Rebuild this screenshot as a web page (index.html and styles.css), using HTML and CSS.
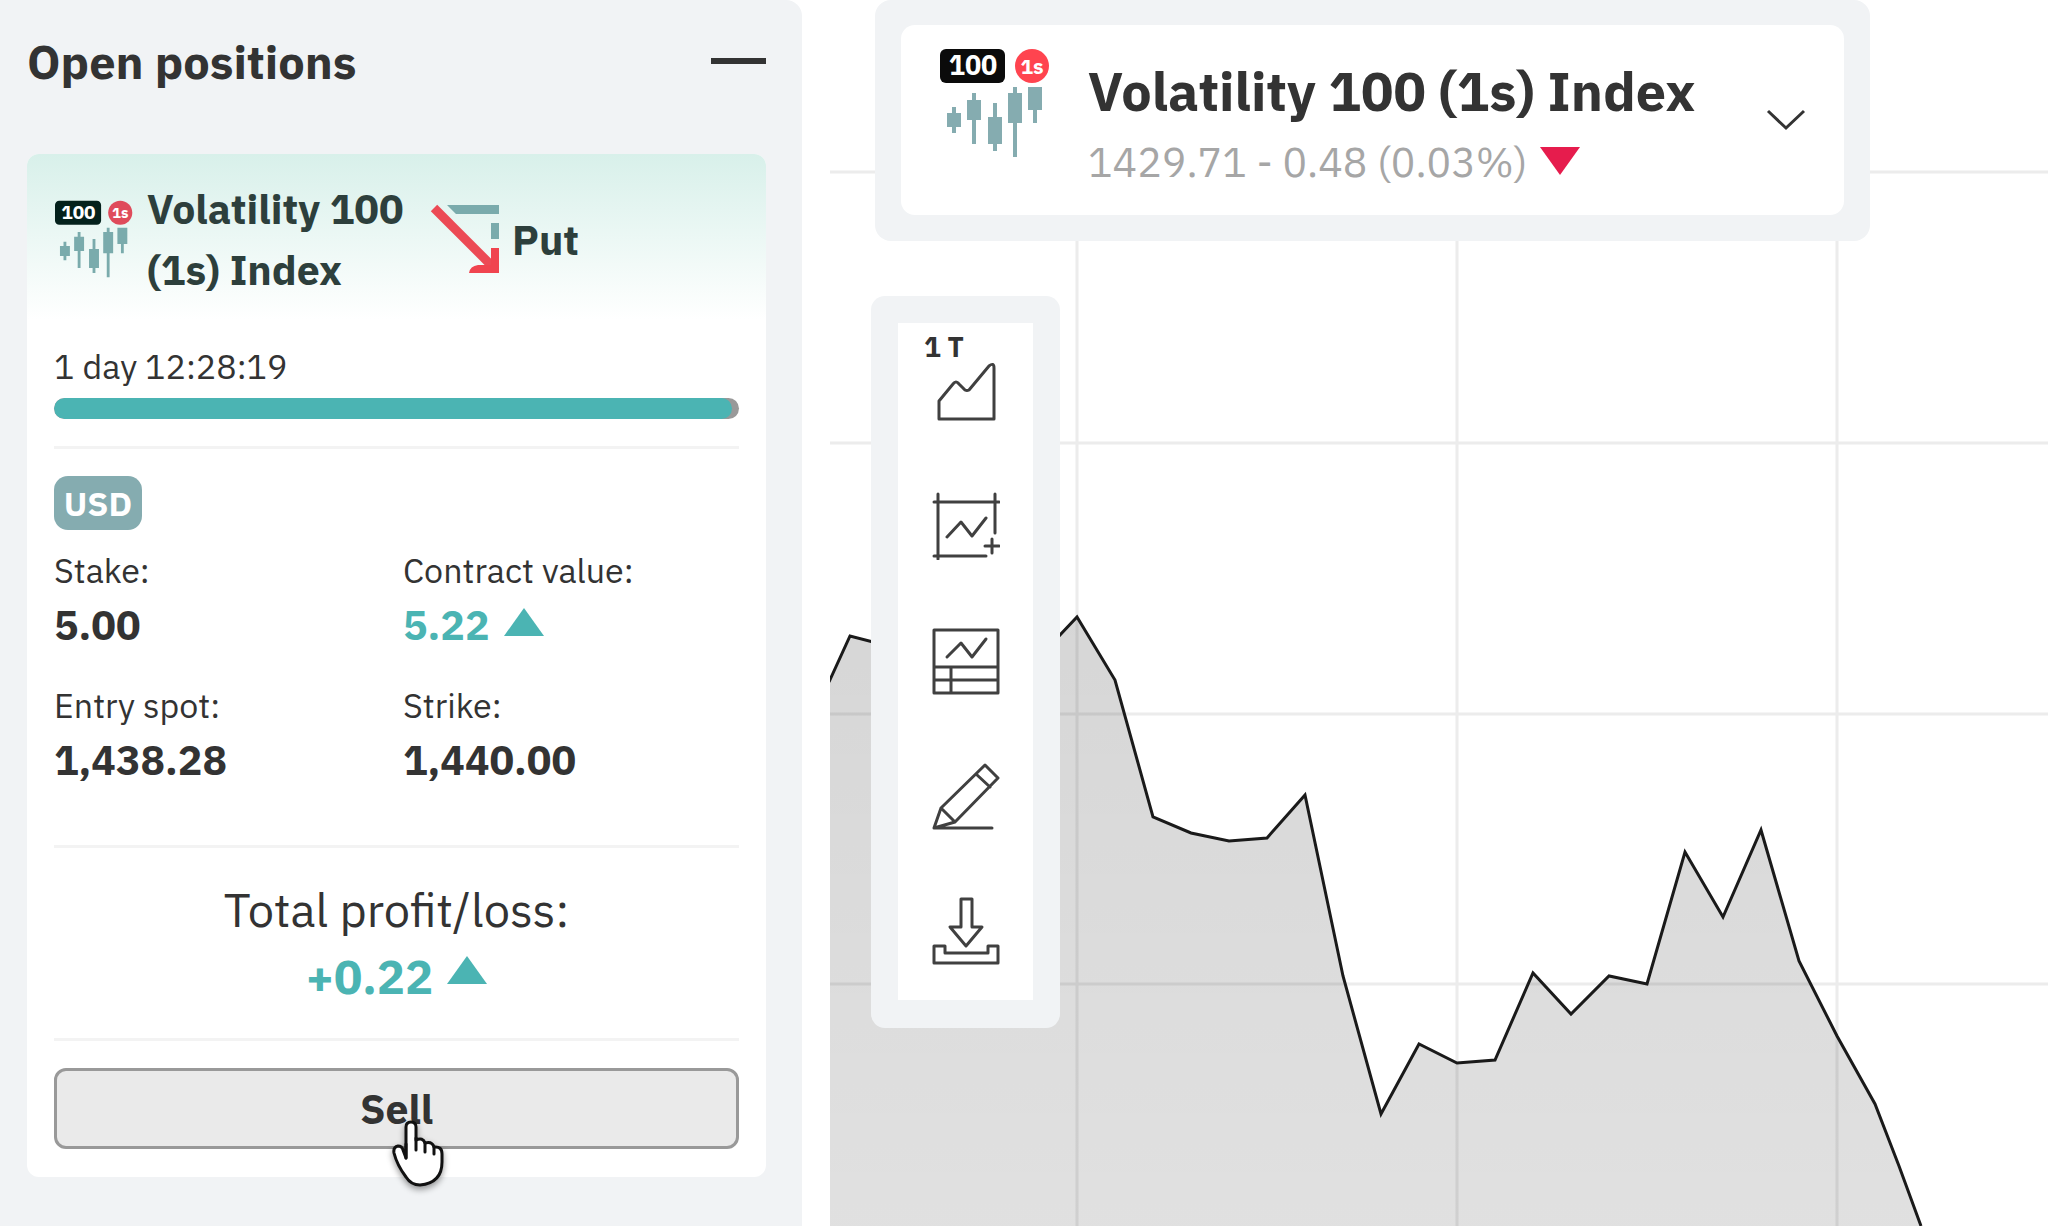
FILE: index.html
```html
<!DOCTYPE html>
<html lang="en">
<head>
<meta charset="utf-8">
<title>Open positions</title>
<link rel="stylesheet" href="styles.css">
</head>
<body>
<aside class="positions">
  <header class="positions-head">
    <h1>Open positions</h1>
    <button class="minimize" type="button" aria-label="Minimize"><span></span></button>
  </header>

  <article class="card">
    <div class="card-head">
      <svg class="index-small" viewBox="0 0 110 110" aria-hidden="true">
        <rect y="1" width="65" height="34" rx="6" fill="#04211c"/>
        <text x="33" y="27" class="icon-num">100</text>
        <circle cx="92" cy="18" r="17" fill="#df4b5b"/>
        <text x="92" y="26" class="icon-sec">1s</text>
        <path fill="#7aabac" d="M7 65h5v-6h4v6h5v14h-5v6h-4v-6H7zM27 52h5v-7h4v7h5v20h-5v24h-4V72h-5zM48 69h5V55h4v14h5v27h-5v7h-4v-7h-5zM68 45h5v-6h4v6h5v30h-5v34h-4V75h-5zM88 39h14v23h-5v13h-4V62h-5z"/>
      </svg>
      <h2>Volatility 100 (1s) Index</h2>
      <svg class="put-icon" viewBox="0 0 70 70" aria-hidden="true">
        <path fill="#7aabac" d="M17 1h52v9H26zM61 19h8v16h-8z"/>
        <path stroke="#ec4a55" stroke-width="9" d="M4 4l58 58"/>
        <path fill="#f0444f" d="M69 44v25H39q1-7 9-8h13V44z"/>
      </svg>
      <span class="put">Put</span>
    </div>

    <div class="card-body">
      <p class="label">1 day 12:28:19</p>
      <div class="bar"><div class="bar-fill" style="width:99%"></div></div>
      <hr>
      <span class="currency">USD</span>
      <dl class="figures">
        <div><dt>Stake:</dt><dd>5.00</dd></div>
        <div><dt>Contract value:</dt><dd class="up">5.22 <svg class="tri tri-value" viewBox="0 0 40 28"><path d="M20 0l20 28H0z"/></svg></dd></div>
        <div><dt>Entry spot:</dt><dd>1,438.28</dd></div>
        <div><dt>Strike:</dt><dd>1,440.00</dd></div>
      </dl>
      <hr>
      <div class="total">
        <p>Total profit/loss:</p>
        <p class="up total-value">+0.22 <svg class="tri" viewBox="0 0 40 28"><path d="M20 0l20 28H0z"/></svg></p>
      </div>
      <hr>
      <button class="sell" type="button">Sell
        <svg class="pointer" viewBox="0 0 52 68" aria-hidden="true">
          <path d="M14 38V7q0-5 5-5t5 5v13q7-3 9 3 7-2 9 4 8-1 8 7v8q0 21-22 23-9 0-14-8Q5 45 2 33q-1-6 4-7 4 0 5 4z"/>
          <path d="M14 38V24M24 18v12M33 23v9M42 27v7"/>
        </svg>
      </button>
    </div>
  </article>
</aside>

<main class="chart">
  <svg class="plot" viewBox="1 0 1218 1226" preserveAspectRatio="xMinYMin slice" aria-hidden="true">
    <defs>
      <linearGradient id="area" x1="0" y1="0" x2="0" y2="1">
        <stop offset="0" stop-color="#000" stop-opacity=".16"/>
        <stop offset="1" stop-color="#000" stop-opacity=".12"/>
      </linearGradient>
    </defs>
    <path class="grid" d="M0 172H1219M0 443H1219M0 714H1219M0 984H1219M248 0V1226M628 0V1226M1008 0V1226"/>
    <path fill="url(#area)" d="M0 1226V682L21 636L44 642L230 636L248 617L286 680L324 817L362 833L400 841L438 838L476 795L514 976L552 1114L590 1044L628 1063L666 1060L704 973L742 1014L780 976L818 984L856 852L894 917L932 830L970 961L1008 1036L1046 1104L1070 1166L1092 1226Z"/>
    <path class="line" d="M0 682L21 636L44 642L230 636L248 617L286 680L324 817L362 833L400 841L438 838L476 795L514 976L552 1114L590 1044L628 1063L666 1060L704 973L742 1014L780 976L818 984L856 852L894 917L932 830L970 961L1008 1036L1046 1104L1070 1166L1092 1226"/>
  </svg>

  <div class="symbol-box">
    <button class="symbol" type="button">
      <svg class="index-large" viewBox="0 0 110 110" aria-hidden="true">
        <rect y="1" width="65" height="34" rx="6" fill="#0b0b0b"/>
        <text x="33" y="27" class="icon-num">100</text>
        <circle cx="92" cy="18" r="17" fill="#ff444f"/>
        <text x="92" y="26" class="icon-sec">1s</text>
        <path fill="#85acb0" d="M7 65h5v-6h4v6h5v14h-5v6h-4v-6H7zM27 52h5v-7h4v7h5v20h-5v24h-4V72h-5zM48 69h5V55h4v14h5v27h-5v7h-4v-7h-5zM68 45h5v-6h4v6h5v30h-5v34h-4V75h-5zM88 39h14v23h-5v13h-4V62h-5z"/>
      </svg>
      <span class="symbol-text">
        <span class="symbol-name">Volatility 100 (1s) Index</span>
        <span class="symbol-price">1429.71 - 0.48 (0.03%) <svg class="tri-down" viewBox="0 0 40 28"><path d="M0 0h40L20 28z"/></svg></span>
      </span>
      <svg class="chevron" viewBox="0 0 40 22" aria-hidden="true"><path d="M2 2l18 17L38 2"/></svg>
    </button>
  </div>

  <nav class="tools" aria-label="Chart tools">
    <div class="tools-list">
      <button type="button" aria-label="Chart type, 1 tick">
        <span class="tick">1 T</span>
        <svg viewBox="0 0 68 68"><path d="M7 62V44L21 27q3-4 6 0l6 6q2 1 4 0L57 9q5-4 5 2v51z"/></svg>
      </button>
      <button type="button" aria-label="Indicators">
        <svg viewBox="0 0 68 68"><path d="M6 2v65M2 10h65M63 2v39M2 64h52M15 45l14-15 11 14 14-18M60 47v14M53 54h14"/></svg>
      </button>
      <button type="button" aria-label="Templates">
        <svg viewBox="0 0 68 68"><path d="M2 3h64v63H2zM15 30l14-14 11 14 14-18M2 40h64M2 53h64M19 40v26"/></svg>
      </button>
      <button type="button" aria-label="Drawing tools">
        <svg viewBox="0 0 68 68"><path d="M2 66h58M2 66l7-20L53 3l13 13-43 44zM9 46l14 14M44 12l14 13"/></svg>
      </button>
      <button type="button" aria-label="Download">
        <svg viewBox="0 0 68 68"><path d="M29 2h11v28h10L34 49 18 30h11zM2 49h11v7h43v-7h10v17H2z"/></svg>
      </button>
    </div>
  </nav>
</main>
</body>
</html>
```
FILE: styles.css
```css
* { box-sizing: border-box; }

body {
  --teal: #4bb4b3;
  --panel: #f1f3f5;
  --text: #333;
  margin: 0;
  display: flex;
  gap: 28px;
  min-height: 100vh;
  background: #fff;
  color: var(--text);
  font-family: "IBM Plex Sans", "Noto Sans", sans-serif;
}

h1, h2, p, dl, dd { margin: 0; }

button {
  font: inherit;
  color: inherit;
  border: 0;
  padding: 0;
  background: none;
  cursor: pointer;
}

svg { display: block; fill: none; flex: none; }

.icon-num, .icon-sec { fill: #fff; font-weight: 700; text-anchor: middle; }
.icon-num { font-size: 27px; }
.icon-sec { font-size: 21px; }

/* Positions panel */
.positions {
  flex: 0 0 802px;
  padding: 0 36px 40px 27px;
  background: var(--panel);
  border-radius: 0 16px 0 0;
}

.positions-head {
  display: flex;
  justify-content: space-between;
  align-items: center;
  height: 124px;
  margin-bottom: 30px;
}

h1 { font-size: 47px; line-height: 64px; }

.minimize { padding: 20px 0 22px; }
.minimize span { display: block; width: 55px; height: 6px; background: var(--text); }

.card { background: #fff; border-radius: 12px; }

.card-head {
  display: flex;
  align-items: center;
  height: 166px;
  padding: 4px 28px 0;
  border-radius: 12px 12px 0 0;
  background: linear-gradient(#d8f0ea, #fff);
  color: #2d3f3c;
  font-weight: 700;
  font-size: 41px;
  line-height: 61px;
}

.index-small { width: 78px; height: 78px; }

.card-head h2 {
  width: 269px;
  margin-left: 14px;
  font-size: 41px;
  line-height: 61px;
}

.put-icon { width: 70px; height: 70px; margin-left: 14px; }
.put { margin-left: 12px; }

.card-body { padding: 24px 27px 28px; }

.label, dt { font-size: 34px; line-height: 44px; }

.bar {
  height: 21px;
  margin-top: 10px;
  border-radius: 11px;
  background: #999;
  overflow: hidden;
}

.bar-fill { height: 100%; border-radius: 11px; background: var(--teal); }

hr { height: 3px; margin: 27px 0; border: 0; background: #f3f3f3; }

.currency {
  display: block;
  width: 88px;
  border-radius: 14px;
  background: #85acb0;
  color: #fff;
  font-size: 34px;
  font-weight: 700;
  line-height: 54px;
  text-align: center;
}

.figures {
  display: grid;
  grid-template-columns: 349px 1fr;
  row-gap: 28px;
  margin: 18px 0 55px;
}

dd {
  display: flex;
  align-items: center;
  margin-top: 3px;
  font-size: 41px;
  font-weight: 700;
  line-height: 60px;
}

.up { color: var(--teal); }

.tri { width: 40px; height: 28px; margin-left: 14px; fill: var(--teal); }
.tri-value { margin-bottom: 6px; }

.total {
  padding: 1px 0;
  font-size: 47px;
  line-height: 67px;
  text-align: center;
}

.total-value { display: flex; justify-content: center; align-items: center; font-weight: 700; }
.total .tri { margin-bottom: 14px; }

.sell {
  position: relative;
  display: block;
  width: 100%;
  height: 81px;
  border: 3px solid #999;
  border-radius: 12px;
  background: #eaeaea;
  font-size: 41px;
  font-weight: 700;
}

.pointer {
  position: absolute;
  left: 50%;
  top: 49px;
  width: 52px;
  height: 68px;
  margin-left: -5px;
  fill: #fff;
  stroke: #111;
  stroke-width: 3;
  stroke-linecap: round;
  stroke-linejoin: round;
  filter: drop-shadow(0 3px 3px rgb(0 0 0 / 40%));
}

/* Chart */
.chart { position: relative; flex: 1; min-width: 0; overflow: hidden; }

.plot { position: absolute; inset: 0; width: 100%; height: 100%; }
.grid { stroke: #ececec; stroke-width: 3; }
.line { stroke: #1a1a1a; stroke-width: 3; }

.symbol-box {
  position: relative;
  width: 995px;
  margin-left: 45px;
  padding: 25px 26px 26px;
  border-radius: 16px;
  background: var(--panel);
}

.symbol {
  display: flex;
  align-items: flex-start;
  width: 100%;
  height: 190px;
  padding: 23px 38px 0 39px;
  border-radius: 14px;
  background: #fff;
  text-align: left;
}

.index-large { width: 110px; height: 110px; }

.symbol-text { flex: 1; margin-left: 38px; padding-top: 5px; }
.symbol-name { display: block; font-size: 54px; font-weight: 700; line-height: 76px; }

.symbol-price {
  display: flex;
  align-items: center;
  margin-top: 3px;
  color: #a6a6a6;
  font-size: 41px;
  line-height: 60px;
}

.tri-down { width: 40px; height: 28px; margin: 0 0 2px 12px; fill: #e61c4d; }

.chevron { width: 40px; height: 22px; margin-top: 61px; stroke: #333; stroke-width: 3; }

.tools {
  position: relative;
  width: 189px;
  margin: 55px 0 0 41px;
  padding: 27px 27px 28px;
  border-radius: 14px;
  background: var(--panel);
}

.tools-list { padding-bottom: 2px; background: #fff; }

.tools button {
  position: relative;
  display: grid;
  place-items: center;
  width: 100%;
  height: 135px;
}

.tools svg {
  width: 68px;
  height: 68px;
  stroke: #404040;
  stroke-width: 3;
  stroke-linecap: round;
  stroke-linejoin: round;
}

.tick {
  position: absolute;
  left: 26px;
  top: 8px;
  font-size: 28px;
  font-weight: 700;
  line-height: 32px;
}
```
